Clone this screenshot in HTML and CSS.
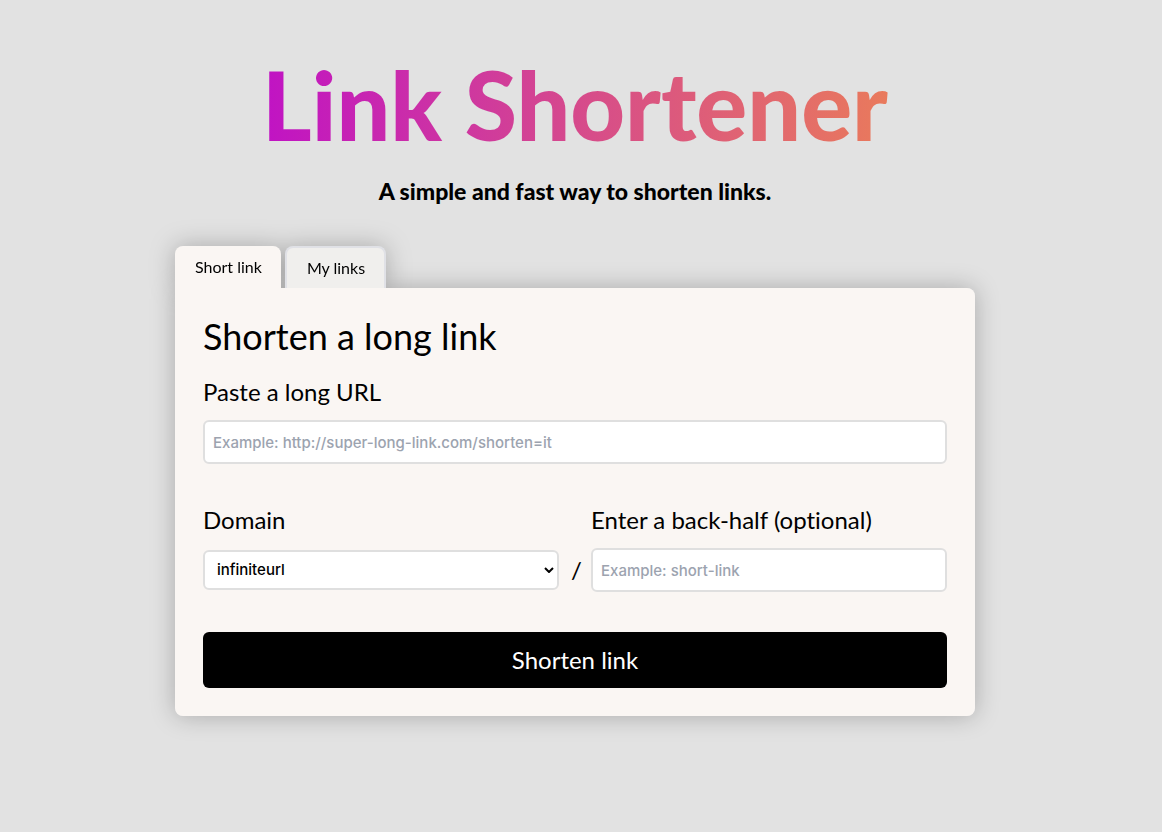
FILE: index.html
```html
<!DOCTYPE html>
<html lang="en">
<head>
<meta charset="utf-8">
<meta name="viewport" content="width=device-width, initial-scale=1">
<title>Link Shortener</title>
<link rel="stylesheet" href="styles.css">
</head>
<body>
<main class="page">
  <header class="hero">
    <h1 class="hero-title">Link Shortener</h1>
    <p class="hero-text">A simple and fast way to shorten links.</p>
  </header>
  <section class="shortener">
    <nav class="tabs">
      <button class="tab tab-active" type="button">Short link</button>
      <button class="tab tab-idle" type="button">My links</button>
    </nav>
    <form class="panel">
      <h2 class="panel-title">Shorten a long link</h2>
      <div class="field">
        <label class="label" for="url">Paste a long URL</label>
        <input class="input" id="url" type="text" placeholder="Example: http://super-long-link.com/shorten=it">
      </div>
      <div class="row">
        <div class="field">
          <label class="label" for="domain">Domain</label>
          <div class="control">
            <select class="select" id="domain"><option>infiniteurl</option></select>
            <svg class="chevron" viewBox="0 0 10 6" aria-hidden="true"><path d="M1 1l4 4 4-4"/></svg>
          </div>
        </div>
        <span class="slash">/</span>
        <div class="field">
          <label class="label" for="alias">Enter a back-half (optional)</label>
          <input class="input" id="alias" type="text" placeholder="Example: short-link">
        </div>
      </div>
      <button class="submit" type="submit">Shorten link</button>
    </form>
  </section>
</main>
</body>
</html>
```
FILE: styles.css
```css
* {
  box-sizing: border-box;
}

body {
  margin: 0;
  background: #e2e2e2;
  color: #000;
  font-family: Lato, sans-serif;
  font-variant-ligatures: none;
}

.page {
  display: flex;
  flex-direction: column;
  align-items: center;
  gap: 40px;
  padding: 56px 12px 56px 0;
}

.hero {
  display: flex;
  flex-direction: column;
  align-items: center;
  gap: 24px;
  text-align: center;
}

.hero-title {
  margin: 0;
  font-size: 95px;
  line-height: 96px;
  font-weight: 900;
  background: linear-gradient(to right, #c013c4, #d64a8c, #e97a5c);
  -webkit-background-clip: text;
  background-clip: text;
  color: transparent;
}

.hero-text {
  margin: 0;
  font-size: 23px;
  line-height: 30px;
  font-weight: 900;
}

.shortener {
  position: relative;
  z-index: 0;
  width: 100%;
  max-width: 800px;
}

.tabs {
  display: flex;
  gap: 4px;
  filter: drop-shadow(0 0 12px rgba(0, 0, 0, 0.25));
}

.tab {
  height: 42px;
  padding: 0 19px 0 20px;
  border: 0;
  border-radius: 8px 8px 0 0;
  color: #000;
  font-family: inherit;
  font-variant-ligatures: none;
  font-size: 16px;
  line-height: 24px;
}

.tab-active {
  background: #faf6f3;
}

.tab-idle {
  border: 2px solid #e0e1e6;
  border-bottom: 0;
  background: #f0efed;
}

.panel {
  position: relative;
  display: flex;
  flex-direction: column;
  padding: 28px;
  border-radius: 0 8px 8px 8px;
  background: #faf6f3;
}

.panel::before {
  content: "";
  position: absolute;
  inset: 0;
  z-index: -1;
  border-radius: 0 8px 8px 8px;
  box-shadow: 0 0 25px rgba(0, 0, 0, 0.25);
}

.panel-title {
  margin: 0 0 20px;
  font-size: 36px;
  line-height: 40px;
  font-weight: 400;
}

.field {
  display: flex;
  flex: 1;
  flex-direction: column;
  gap: 12px;
  min-width: 0;
}

.label {
  font-size: 24px;
  line-height: 32px;
}

.input,
.select {
  width: 100%;
  border: 2px solid #dfdfdf;
  border-radius: 6px;
  background: #fff;
  font-family: Inter, sans-serif;
  font-size: 15px;
  font-weight: 500;
  line-height: 24px;
}

.input {
  height: 44px;
  padding: 0 8px;
}

.input::placeholder {
  color: #9ca3af;
  opacity: 1;
}

.control {
  position: relative;
  display: flex;
  align-items: center;
  height: 44px;
}

.select {
  height: 40px;
  padding: 0 24px 0 12px;
  color: #000;
  appearance: none;
}

.chevron {
  position: absolute;
  right: 5px;
  width: 10px;
  height: 6px;
  fill: none;
  stroke: #000;
  stroke-width: 2;
}

.row {
  display: flex;
  align-items: flex-end;
  gap: 12px;
  margin: 40px 0;
}

.slash {
  width: 8px;
  font-size: 24px;
  line-height: 44px;
}

.submit {
  height: 56px;
  border: 0;
  border-radius: 6px;
  background: #000;
  color: #fff;
  font-family: inherit;
  font-size: 24px;
  line-height: 32px;
}
```
